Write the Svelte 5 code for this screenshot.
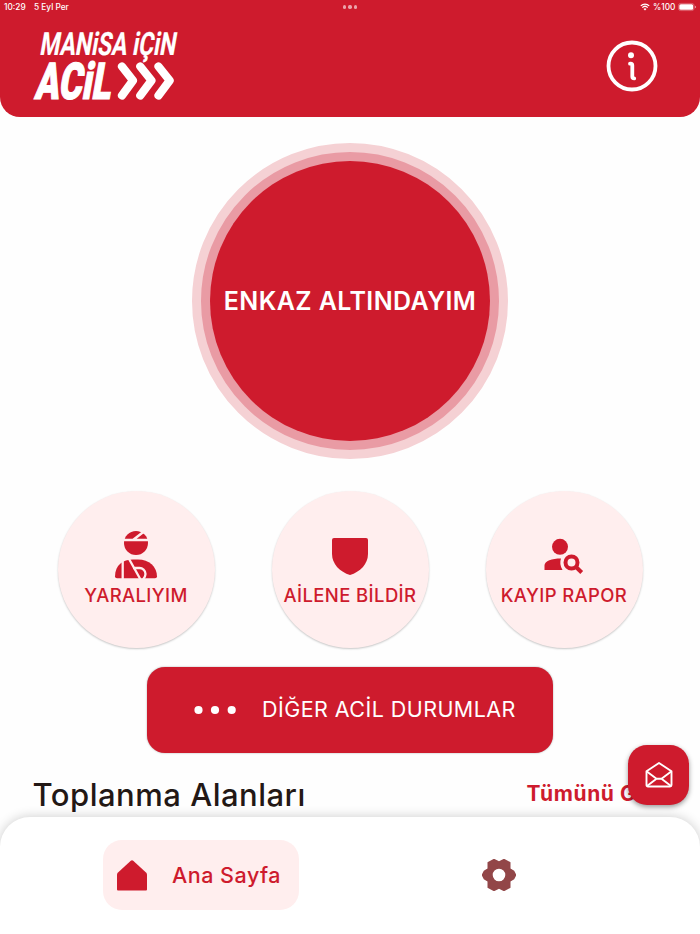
<script>
  let active = $state('home')
</script>

<div class="screen">
  <header>
    <div class="status">
      <span class="time">10:29</span>
      <span class="date">5 Eyl Per</span>
      <span class="dots"><i></i><i></i><i></i></span>
      <svg class="wifi" width="10" height="8" viewBox="0 0 10 8">
        <path d="M.8 2.9a6 6 0 0 1 8.4 0M2.3 4.6a3.9 3.9 0 0 1 5.4 0" fill="none" stroke="#fff" stroke-width="1.3" />
        <path d="M5 7.4 3.5 5.9a2.2 2.2 0 0 1 3 0z" fill="#fff" />
      </svg>
      <span class="percent">%100</span>
      <svg class="battery" width="18" height="8" viewBox="0 0 18 8">
        <rect x=".4" y=".4" width="15.7" height="7.2" rx="2.3" fill="none" stroke="#e58c95" stroke-width=".6" />
        <rect x="1.3" y="1.3" width="13.9" height="5.4" rx="1.5" fill="#fff" />
        <path d="M17 2.8v2.4q1-.4 1-1.2t-1-1.2" fill="#eba3aa" />
      </svg>
    </div>
    <div class="bar">
      <svg class="logo" width="150" height="76" viewBox="0 0 150 76">
        <text class="logo-top" transform="translate(9 29) skewX(-10)" textLength="136" lengthAdjust="spacingAndGlyphs">MANiSA iÇiN</text>
        <text class="logo-main" transform="translate(4 73) skewX(-10)" textLength="76" lengthAdjust="spacingAndGlyphs">ACiL</text>
        <path d="M92 40.500L103 54.500L92 69.500M110.300 40.500L121.500 54.500L110.300 69.500M128.500 40.500L139.700 54.500L128.500 69.500" fill="none" stroke="#fff" stroke-width="8.200" stroke-linecap="round" stroke-linejoin="round" />
      </svg>
      <button class="info" aria-label="Bilgi">
        <svg width="52" height="52" viewBox="0 0 52 52">
          <circle cx="26" cy="26" r="23.500" fill="none" stroke="#fff" stroke-width="3.800" />
          <circle cx="25" cy="15.200" r="3" fill="#fff" />
          <path d="M24 23.700h.6q1.700 0 1.700 1.800v11q0 1.900 1.900 1.900" fill="none" stroke="#fff" stroke-width="3.800" stroke-linecap="round" />
        </svg>
      </button>
    </div>
  </header>

  <main>
    <button class="sos"><span>ENKAZ ALTINDAYIM</span></button>

    <div class="actions">
      <button class="action">
        <svg width="42" height="48" viewBox="0 0 42 48">
          <circle cx="21" cy="12" r="12" fill="#ce1b2d" />
          <path d="M8 9h27M18 9l11-8.500" stroke="#ffeeee" stroke-width="2.500" />
          <path d="M0 45.500C0 34 8 28.500 18 28.500h5c11 0 19 7 19 17q0 1.800-2 1.800H2q-2 0-2-1.800z" fill="#ce1b2d" />
          <path d="M7.700 28v20M13.500 27l12 21.500M18 37h6a6 6 0 0 1 6.500 6q0 3-2.500 5.500" fill="none" stroke="#ffeeee" stroke-width="2.300" />
        </svg>
        <span class="label">YARALIYIM</span>
      </button>
      <button class="action">
        <svg width="36" height="48" viewBox="0 0 36 48">
          <path d="M2 7h32q2 0 2 2v14C36 33 28 41 18 44 8 41 0 33 0 23V9q0-2 2-2z" fill="#ce1b2d" />
        </svg>
        <span class="label">AİLENE BİLDİR</span>
      </button>
      <button class="action">
        <svg width="40" height="48" viewBox="0 0 40 48">
          <circle cx="16" cy="15.800" r="8" fill="#ce1b2d" />
          <path d="M.5 39v-4.500C.5 30 8 27.500 17 27.500q-2 5.500 1.500 11.500z" fill="#ce1b2d" />
          <circle cx="27.500" cy="31.500" r="6" fill="none" stroke="#ce1b2d" stroke-width="4" />
          <path d="M31.500 35.500l6.200 6" stroke="#ce1b2d" stroke-width="4" />
        </svg>
        <span class="label">KAYIP RAPOR</span>
      </button>
    </div>

    <button class="other">
      <svg width="42" height="10" viewBox="0 0 42 10">
        <circle cx="4.500" cy="5" r="4.100" fill="#fff" />
        <circle cx="21" cy="5" r="4.100" fill="#fff" />
        <circle cx="37.700" cy="5" r="4.100" fill="#fff" />
      </svg>
      <span>DİĞER ACİL DURUMLAR</span>
    </button>

    <div class="section">
      <h2>Toplanma Alanları</h2>
      <a href="#all">Tümünü Gör</a>
    </div>
  </main>

  <button class="mail" aria-label="Mesajlar">
    <svg width="28" height="26" viewBox="0 0 28 26" fill="none" stroke="#fff" stroke-width="1.900" stroke-linejoin="round">
      <path d="M1.500 9.300L14 1l12.500 8.300V23q0 1.500-1.500 1.500H3q-1.500 0-1.500-1.500z" />
      <path d="M1.500 9.300l10 7.500h5l10-7.500M2 24l9.500-7.200M26 24l-9.500-7.200" />
    </svg>
  </button>

  <nav>
    <button class="tab" class:active={active === 'home'} onclick={() => (active = 'home')}>
      <svg width="30" height="31" viewBox="0 0 30 31">
        <path d="M13.800.7q1.200-1 2.400 0L29 12.500q1 1 1 2.300V29.500q0 1-1 1H1q-1 0-1-1V14.800q0-1.300 1-2.300z" fill="#ce1b2d" />
      </svg>
      <span>Ana Sayfa</span>
    </button>
    <button class="tab settings" class:active={active === 'settings'} onclick={() => (active = 'settings')} aria-label="Ayarlar">
      <svg width="34" height="32" viewBox="0 0 34 32">
        <path fill-rule="evenodd" d="M11.500 0h1L17 2.200 21.500 0h1L28.500 3.200V9.500L32.200 11.700 34 15.300v1.400L32.200 20.300 28.500 22.500V28.800L22.500 32h-1L17 29.800 12.500 32h-1L5.500 28.800V22.500L1.800 20.300 0 16.700V15.300L1.800 11.700 5.500 9.500V3.200zM17 9.700a6.300 6.300 0 1 0 0 12.600a6.300 6.300 0 1 0 0-12.600z" fill="#924648" />
      </svg>
    </button>
  </nav>
</div>

<style>
  :global(body) {
    margin: 0;
    background: #fefefe;
    overflow: hidden;
  }
  button {
    border: 0;
    padding: 0;
    margin: 0;
    background: none;
    font-family: inherit;
    white-space: nowrap;
  }
  svg {
    display: block;
    flex: none;
    overflow: visible;
  }
  .screen {
    position: relative;
    width: 700px;
    height: 934px;
    overflow: hidden;
    display: flex;
    flex-direction: column;
    background: #fefefe;
    font-family: Inter, 'Liberation Sans', sans-serif;
  }
  header {
    height: 117px;
    flex: none;
    background: #ce1b2d;
    border-radius: 0 0 20px 20px;
    color: #fff;
  }
  .status {
    height: 14px;
    display: flex;
    align-items: center;
    padding: 0 4px;
    box-sizing: border-box;
    font-size: 8.3px;
    font-weight: 500;
    line-height: 14px;
  }
  .time {
    width: 30px;
  }
  .date {
    width: 309px;
  }
  .dots {
    display: flex;
    gap: 2px;
    width: 298px;
  }
  .dots i {
    width: 3.3px;
    height: 3.3px;
    border-radius: 50%;
    background: #eba3aa;
  }
  .percent {
    width: 25px;
    padding-left: 3px;
    flex: none;
  }
  .wifi {
    margin-left: -1px;
  }
  .bar {
    height: 103px;
    box-sizing: border-box;
    display: flex;
    justify-content: space-between;
    align-items: flex-start;
    padding: 12px 42px 0 30px;
  }
  .logo text {
    fill: #fff;
    font-family: Roboto, sans-serif;
    stroke: #fff;
  }
  .logo .logo-top {
    font-size: 32px;
    font-weight: 700;
    stroke-width: 0.2px;
  }
  .logo .logo-main {
    font-size: 51px;
    font-weight: 900;
    stroke-width: 1.2px;
  }
  .info {
    margin-top: 14px;
  }
  main {
    display: flex;
    flex-direction: column;
    align-items: center;
  }
  .sos {
    width: 316px;
    height: 316px;
    margin-top: 26px;
    box-sizing: border-box;
    border-radius: 50%;
    display: flex;
    border: 9px solid #f5d1d4;
    background: #e99ba4;
    padding: 9px;
  }
  .sos span {
    flex: 1;
    display: flex;
    align-items: center;
    justify-content: center;
    border-radius: 50%;
    background: #ce1b2d;
    color: #fff;
    font-size: 25px;
    font-weight: 600;
    letter-spacing: 0.4px;
  }
  .actions {
    display: flex;
    gap: 57px;
    margin-top: 32px;
  }
  .action {
    width: 157px;
    height: 157px;
    box-sizing: border-box;
    border-radius: 50%;
    background: #ffeeee;
    box-shadow: 0 1px 2px rgba(0, 0, 0, 0.22);
    display: flex;
    flex-direction: column;
    align-items: center;
    padding-top: 40px;
    color: #ce1b2d;
  }
  .label {
    margin-top: 4px;
    font-size: 18.5px;
    line-height: 24px;
    font-weight: 550;
    letter-spacing: 0.38px;
  }
  .other {
    width: 406px;
    height: 86px;
    margin-top: 19px;
    box-sizing: border-box;
    border-radius: 18px;
    background: #ce1b2d;
    box-shadow: 0 0 2px rgba(0, 0, 0, 0.35);
    display: flex;
    align-items: center;
    padding-left: 47px;
    gap: 26px;
    color: #fff;
    font-size: 21.5px;
    letter-spacing: 0.44px;
  }
  .other span {
    padding-bottom: 2px;
  }
  .section {
    width: 635px;
    display: flex;
    justify-content: space-between;
    align-items: center;
    margin-top: 20px;
    height: 40px;
    white-space: nowrap;
  }
  h2 {
    margin: 0;
    padding-top: 2px;
    font-size: 31px;
    font-weight: 550;
    letter-spacing: 0.5px;
    color: #231815;
  }
  .section a {
    width: 141px;
    color: #ce1b2d;
    text-decoration: none;
    font-size: 21px;
    font-weight: 700;
    letter-spacing: 0.6px;
  }
  .mail {
    position: absolute;
    right: 11px;
    bottom: 129px;
    width: 61px;
    height: 60px;
    border-radius: 19px;
    background: #ce1b2d;
    box-shadow: 0 2px 5px rgba(0, 0, 0, 0.4);
    display: grid;
    place-items: center;
    z-index: 2;
  }
  nav {
    position: absolute;
    left: 0;
    bottom: 0;
    width: 700px;
    height: 117px;
    box-sizing: border-box;
    border-radius: 30px 30px 0 0;
    background: #fff;
    box-shadow: 0 0 12px rgba(0, 0, 0, 0.2);
    display: flex;
    align-items: flex-start;
    padding: 23px 103px 0;
  }
  .tab {
    height: 70px;
    width: 196px;
    box-sizing: border-box;
    border-radius: 19px;
    display: flex;
    align-items: center;
    gap: 25px;
    padding-left: 14px;
    color: #ce1b2d;
    font-size: 21.5px;
    font-weight: 550;
    letter-spacing: 0.5px;
  }
  .tab.active {
    background: #ffeeee;
  }
  .settings {
    margin-left: 102px;
    justify-content: center;
    padding: 0;
  }
</style>
